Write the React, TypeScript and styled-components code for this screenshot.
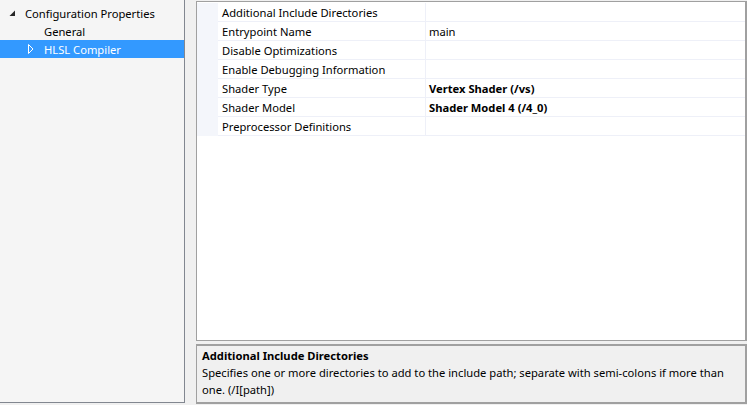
import React from "react";
import styled, { createGlobalStyle } from "styled-components";

const GlobalStyle = createGlobalStyle`
  html, body {
    margin: 0;
    padding: 0;
    background: #f0f0f0;
    overflow: hidden;
  }
  body {
    font-family: "Noto Sans", "Open Sans", sans-serif;
    font-size: 11.2px;
    color: #000;
  }
`;

const Window = styled.div`
  display: flex;
  width: 747px;
  height: 405px;
  background: #f0f0f0;
  overflow: hidden;
`;

const TreePanel = styled.div`
  box-sizing: border-box;
  width: 186px;
  height: 404px;
  margin: -1px 0 0 -1px;
  padding-top: 4px;
  background: #f5f5f5;
  border: 1px solid #828790;
  display: flex;
  flex-direction: column;
`;

const TreeRow = styled.div<{ $depth: number; $selected?: boolean }>`
  display: flex;
  align-items: center;
  height: 18px;
  width: 184px;
  padding-left: ${(p) => 9 + p.$depth * 19}px;
  box-sizing: border-box;
  background: ${(p) => (p.$selected ? "#3399ff" : "transparent")};
  color: ${(p) => (p.$selected ? "#fff" : "#000")};
  white-space: nowrap;
`;

const Glyph = styled.span`
  display: inline-flex;
  width: 16px;
  height: 18px;
  align-items: center;
  justify-content: flex-start;
`;

const RightColumn = styled.div`
  display: flex;
  flex-direction: column;
  margin-left: 11px;
  padding-top: 1px;
  width: 551px;
  gap: 3px;
`;

const Grid = styled.div`
  box-sizing: border-box;
  height: 340px;
  padding-top: 1px;
  background: #fff;
  border: 1px solid #a0a0a0;
  border-right: 2px solid #a0a0a0;
  display: flex;
  flex-direction: column;
`;

const Row = styled.div`
  display: grid;
  grid-template-columns: 21px 208px 1fr;
  height: 19px;
  box-sizing: border-box;
`;

const Gutter = styled.div`
  background: #f4f6fb;
`;

const NameCell = styled.div`
  display: flex;
  align-items: center;
  padding-left: 4px;
  border-bottom: 1px solid #eef0f8;
  border-right: 1px solid #eef0f8;
  white-space: nowrap;
`;

const ValueCell = styled.div<{ $bold?: boolean }>`
  display: flex;
  align-items: center;
  padding-left: 3px;
  border-bottom: 1px solid #eef0f8;
  font-weight: ${(p) => (p.$bold ? 700 : 400)};
  white-space: nowrap;
`;

const Description = styled.div`
  box-sizing: border-box;
  height: 60px;
  background: #f0f0f0;
  border: 1px solid #a0a0a0;
  border-width: 2px 2px 2px 1px;
  padding: 1px 0 0 5px;
  line-height: 17px;
`;

const DescTitle = styled.div`
  font-weight: 700;
`;

const properties = [
  { name: "Additional Include Directories", value: "", bold: false },
  { name: "Entrypoint Name", value: "main", bold: false },
  { name: "Disable Optimizations", value: "", bold: false },
  { name: "Enable Debugging Information", value: "", bold: false },
  { name: "Shader Type", value: "Vertex Shader (/vs)", bold: true },
  { name: "Shader Model", value: "Shader Model 4 (/4_0)", bold: true },
  { name: "Preprocessor Definitions", value: "", bold: false },
];

const Expanded = () => (
  <svg width="7" height="7" viewBox="0 0 7 7">
    <path d="M6 0.5 L6 6 L0.5 6 Z" fill="#262626" />
  </svg>
);

const Collapsed = () => (
  <svg width="6" height="10" viewBox="0 0 6 10">
    <path d="M0.5 0.5 L5 5 L0.5 9.5 Z" fill="none" stroke="#fff" strokeWidth="1" />
  </svg>
);

export default function App() {
  return (
    <>
      <GlobalStyle />
      <Window>
        <TreePanel>
          <TreeRow $depth={0}>
            <Glyph>
              <Expanded />
            </Glyph>
            Configuration Properties
          </TreeRow>
          <TreeRow $depth={1}>
            <Glyph />
            General
          </TreeRow>
          <TreeRow $depth={1} $selected>
            <Glyph>
              <Collapsed />
            </Glyph>
            HLSL Compiler
          </TreeRow>
        </TreePanel>
        <RightColumn>
          <Grid>
            {properties.map((p) => (
              <Row key={p.name}>
                <Gutter />
                <NameCell>{p.name}</NameCell>
                <ValueCell $bold={p.bold}>{p.value}</ValueCell>
              </Row>
            ))}
          </Grid>
          <Description>
            <DescTitle>Additional Include Directories</DescTitle>
            Specifies one or more directories to add to the include path; separate with semi-colons if more than
            <br />
            one. (/I[path])
          </Description>
        </RightColumn>
      </Window>
    </>
  );
}
